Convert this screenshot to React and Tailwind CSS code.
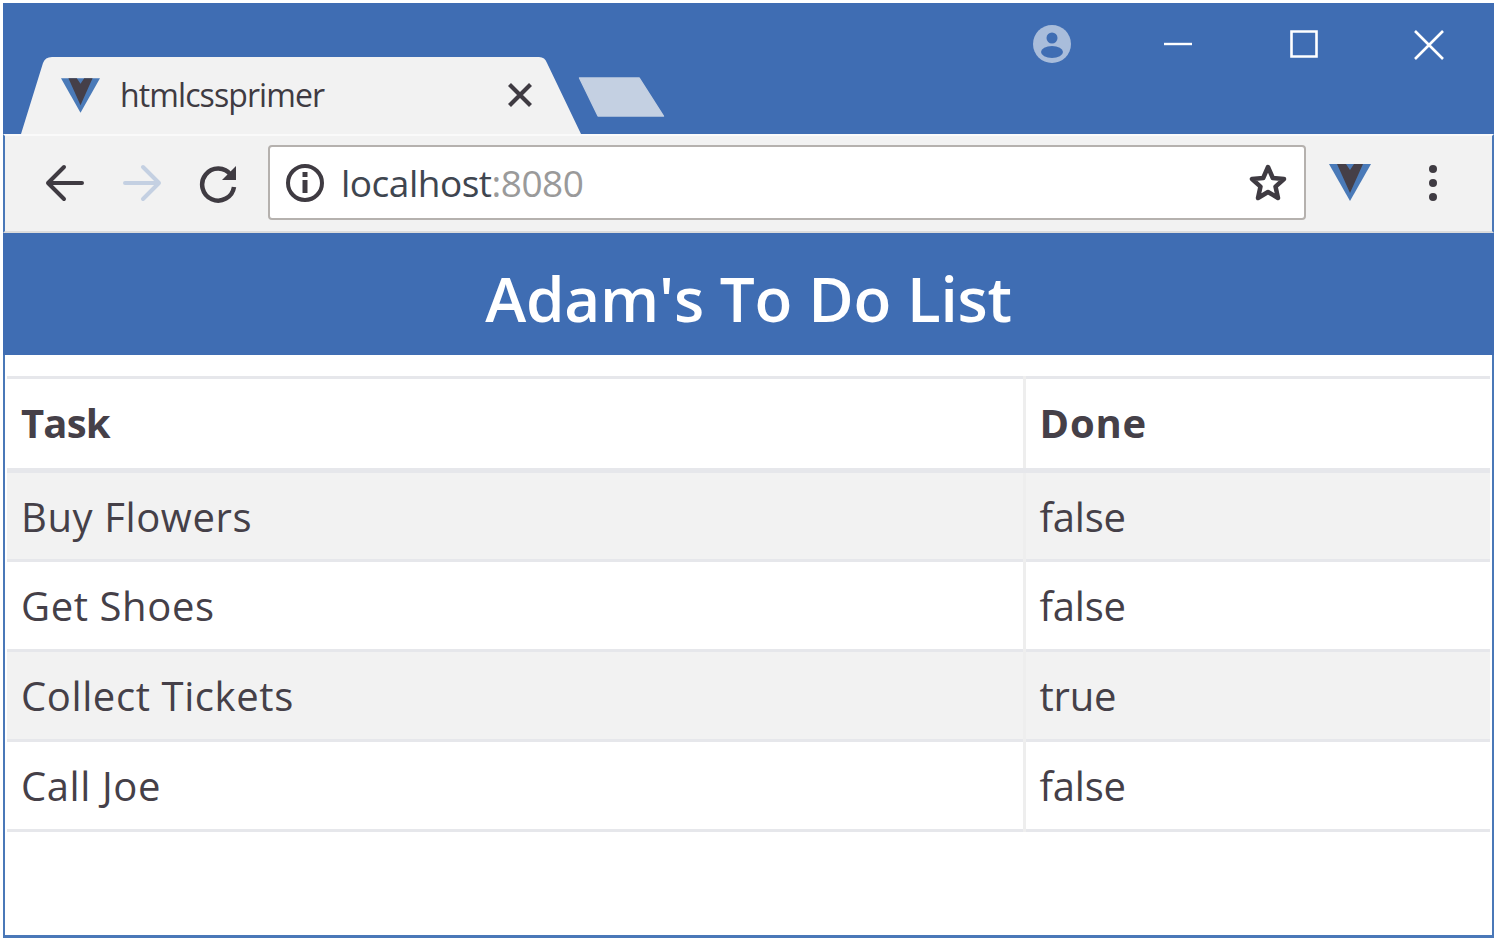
const tasks = [
  { name: "Buy Flowers", done: "false" },
  { name: "Get Shoes", done: "false" },
  { name: "Collect Tickets", done: "true" },
  { name: "Call Joe", done: "false" },
];

function VueLogo({ className }) {
  return (
    <svg viewBox="0 0 42 38" className={className}>
      <path d="M0 1h42L21 38z" fill="#4a7ab8" />
      <path d="M8 1h9l4 6 4-6h9L21 30z" fill="#453f48" />
    </svg>
  );
}

function TitleBar() {
  return (
    <div className="flex h-[131px] bg-[#3f6db3]">
      <div className="relative mt-[54px] ml-[18px] h-[77px] w-[560px] shrink-0">
        <svg viewBox="0 0 560 77" className="absolute inset-0 h-full w-full">
          <path d="M0 77L22 6Q24 0 31 0H518Q524 0 526 6L560 77z" fill="#f2f2f2" />
        </svg>
        <div className="relative flex h-full items-center pb-[2px]">
          <VueLogo className="ml-[40px] h-[36px] w-[39px] shrink-0" />
          <span className="ml-[20px] w-[203px] text-[32px] leading-none tracking-[-0.9px] text-[#3f3b42]">htmlcssprimer</span>
          <svg viewBox="0 0 24 24" className="ml-[183px] h-[28px] w-[28px]" fill="none" stroke="#3f3b42" strokeWidth="3.6">
            <path d="M3 3l18 18M21 3L3 21" />
          </svg>
        </div>
      </div>
      <svg viewBox="0 0 88 41" className="ml-[-3px] mt-[74px] h-[40px] w-[87px] shrink-0">
        <path d="M1 1H62L87 40H20z" fill="#c4d0e2" stroke="#c4d0e2" strokeLinejoin="round" strokeWidth="1.5" />
      </svg>
      <div className="ml-auto flex items-start pt-[22px]">
        <svg viewBox="0 0 38 38" className="h-[38px] w-[38px]">
          <circle cx="19" cy="19" r="19" fill="#a9bddb" />
          <circle cx="19" cy="13" r="5.5" fill="#3f6db3" />
          <ellipse cx="19" cy="27" rx="11" ry="6" fill="#3f6db3" />
        </svg>
        <svg viewBox="0 0 28 28" className="ml-[93px] mt-[5px] h-[28px] w-[28px]" fill="none" stroke="#ffffff" strokeWidth="2.4">
          <path d="M0 14h28" />
        </svg>
        <svg viewBox="0 0 28 28" className="ml-[98px] mt-[5px] h-[28px] w-[28px]" fill="none" stroke="#ffffff" strokeWidth="2.6">
          <path d="M1.5 1.5h25v25h-25z" />
        </svg>
        <svg viewBox="0 0 30 30" className="ml-[96px] mr-[50px] mt-[5px] h-[30px] w-[30px]" fill="none" stroke="#ffffff" strokeWidth="2.6">
          <path d="M1 1l28 28M29 1L1 29" />
        </svg>
      </div>
    </div>
  );
}

function Toolbar() {
  return (
    <div className="flex h-[99px] items-center border-x-2 border-t-2 border-b-2 border-x-[#4a78b8] border-t-[#fafafa] border-b-[#dcdcdc] bg-[#f2f2f2] pb-[3px]">
      <svg viewBox="0 0 40 40" className="ml-[39px] mt-[2px] h-[40px] w-[40px] shrink-0" fill="none" stroke="#3f3b42" strokeWidth="4" strokeLinecap="round" strokeLinejoin="round">
        <path d="M38 20H4M20 4L4 20l16 16" />
      </svg>
      <svg viewBox="0 0 40 40" className="ml-[39px] mt-[2px] h-[40px] w-[40px] shrink-0" fill="none" stroke="#c4d0e2" strokeWidth="4" strokeLinecap="round" strokeLinejoin="round">
        <path d="M2 20h34M20 4l16 16-16 16" />
      </svg>
      <svg viewBox="0 0 40 40" className="ml-[35px] mt-[2px] h-[40px] w-[40px] shrink-0" fill="none" stroke="#3f3b42" strokeWidth="4.5">
        <path d="M33 12a16 16 0 1 0 3 12" />
        <path d="M38 3v14H24z" fill="#3f3b42" stroke="none" />
      </svg>
      <div className="ml-[30px] flex h-[75px] w-[1038px] shrink-0 items-center rounded-[4px] border-2 border-[#b5b1ae] bg-white pt-[1px]">
        <svg viewBox="0 0 40 40" className="ml-[15px] h-[40px] w-[40px] shrink-0" fill="none" stroke="#3f3b42" strokeWidth="4">
          <circle cx="20" cy="20" r="17" />
          <path d="M20 17v13" strokeWidth="5" />
          <path d="M20 9v5" strokeWidth="5" />
        </svg>
        <span className="ml-[16px] text-[37px] leading-none tracking-[-0.5px] text-[#3f4650]">
          localhost<span className="text-[#9a9a9a]">:8080</span>
        </span>
        <svg viewBox="0 0 40 40" className="ml-auto mr-[16px] h-[40px] w-[40px] shrink-0" fill="none" stroke="#3f3b42" strokeWidth="4.5" strokeLinejoin="round">
          <path d="M20 4l4.8 11 11.2 1-8.5 7.6 2.5 11.4-10-6-10 6 2.5-11.4L4 16l11.2-1z" />
        </svg>
      </div>
      <VueLogo className="ml-[23px] h-[38px] w-[42px] shrink-0" />
      <div className="ml-[58px] mt-[2px] flex shrink-0 flex-col gap-[6px]">
        <div className="h-[8px] w-[8px] rounded-full bg-[#3f3b42]" />
        <div className="h-[8px] w-[8px] rounded-full bg-[#3f3b42]" />
        <div className="h-[8px] w-[8px] rounded-full bg-[#3f3b42]" />
      </div>
    </div>
  );
}

export default function App() {
  return (
    <div className="h-[944px] w-[1500px] bg-white pl-[3px] pt-[3px] font-['Open_Sans',sans-serif]">
      <div className="flex h-[935px] w-[1491px] flex-col border-b-[3px] border-b-[#4a78b8]">
        <TitleBar />
        <Toolbar />
        <div className="flex h-[122px] items-center justify-center bg-[#3f6db3] pt-[7px] text-[62px] leading-none font-semibold tracking-[-0.2px] text-white">
          Adam's To Do List
        </div>
        <div className="flex-1 border-x-2 border-x-[#4a78b8] px-[2px] pt-[21px]">
          <table className="w-full table-fixed border-collapse text-[40px] leading-none tracking-[0.6px] text-[#454048]">
            <thead>
              <tr className="h-[93px] border-y-[3px] border-b-[5px] border-y-[#e6e7eb]">
                <th className="w-[1017px] border-r-[3px] border-r-[#eeeeee] pl-[14px] pb-[2px] text-left font-bold tracking-[-0.8px]">Task</th>
                <th className="pl-[14px] pb-[2px] text-left font-bold tracking-[0.8px]">Done</th>
              </tr>
            </thead>
            <tbody>
              {tasks.map((t, i) => (
                <tr key={t.name} className={`h-[90px] border-b-[3px] border-b-[#e6e7eb] ${i % 2 === 0 ? "bg-[#f2f2f2]" : "bg-white"}`}>
                  <td className="border-r-[3px] border-r-[#eeeeee] pl-[14px] pt-[1px]">{t.name}</td>
                  <td className="pl-[14px] pt-[1px] tracking-[-0.2px]">{t.done}</td>
                </tr>
              ))}
            </tbody>
          </table>
        </div>
      </div>
    </div>
  );
}
